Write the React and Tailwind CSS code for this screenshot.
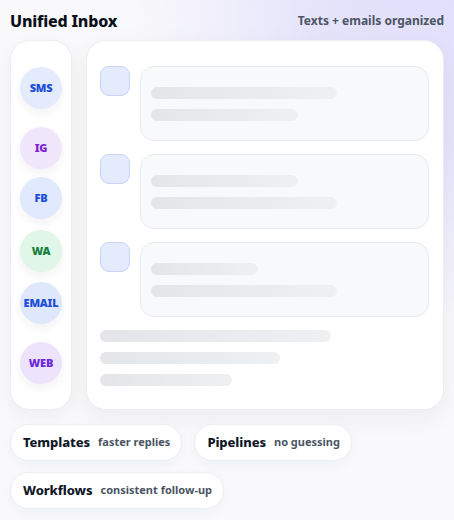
const channels = [
  { label: 'SMS', cls: 'bg-[#e3ebfd] text-[#1d4ed8]', mt: 'mt-[26px]' },
  { label: 'IG', cls: 'bg-[#f0e7fd] text-[#7e22ce]', mt: 'mt-[18px]' },
  { label: 'FB', cls: 'bg-[#e0e9fd] text-[#1d4ed8]', mt: 'mt-[8px]' },
  { label: 'WA', cls: 'bg-[#e0f6e9] text-[#15803d]', mt: 'mt-[11px]' },
  { label: 'EMAIL', cls: 'bg-[#dfe7fd] text-[#1d4ed8]', mt: 'mt-[10px]' },
  { label: 'WEB', cls: 'bg-[#ede3fd] text-[#6d28d9]', mt: 'mt-[18px]' },
];

const rows = [
  ['w-[186px]', 'w-[147px]'],
  ['w-[147px]', 'w-[186px]'],
  ['w-[107px]', 'w-[186px]'],
];

const pills = [
  { title: 'Templates', sub: 'faster replies' },
  { title: 'Pipelines', sub: 'no guessing' },
  { title: 'Workflows', sub: 'consistent follow-up' },
];

const Bar = ({ w }) => (
  <div className={`${w} h-3 rounded-full bg-gradient-to-r from-[#e4e5e9] to-[#eff0f2]`} />
);

const App = () => {
  return (
    <div
      className="w-[454px] h-[520px] overflow-hidden bg-[#f9f9fb] bg-[radial-gradient(ellipse_320px_330px_at_100%_0%,#e1dffb_0%,#e6e4fb_45%,rgba(249,249,251,0)_100%)] px-[10px] text-[#111827]"
      style={{ fontFamily: '"Noto Sans", "Open Sans", sans-serif' }}
    >
      <div className="flex items-center justify-between h-[40px] pt-[1px]">
        <h1 className="text-[16px] font-extrabold tracking-[-0.2px] text-[#0b0f19]">Unified Inbox</h1>
        <span className="text-[12px] font-bold text-[#4b5563]">Texts + emails organized</span>
      </div>

      <div className="flex gap-[14px] h-[370px]">
        <div className="w-[62px] shrink-0 rounded-[20px] bg-white border border-[#eceef2] shadow-[0_6px_18px_rgba(30,41,59,0.05)] flex flex-col items-center">
          {channels.map(c => (
            <div
              key={c.label}
              className={`${c.mt} w-[42px] h-[42px] rounded-full ${c.cls} flex items-center justify-center text-[11px] font-black tracking-[-0.2px] shadow-[0_4px_10px_rgba(30,41,59,0.06)]`}
            >
              {c.label}
            </div>
          ))}
        </div>

        <div className="flex-1 rounded-[20px] bg-white border border-[#eceef2] shadow-[0_8px_24px_rgba(30,41,59,0.06)] pl-[13px] pr-[14px] pt-[25px]">
          <div className="flex flex-col gap-[13px]">
            {rows.map((r, i) => (
              <div key={i} className="flex gap-[10px]">
                <div className="w-[30px] h-[30px] shrink-0 rounded-[9px] bg-[#e3ebfd] border border-[#c7d5fb]" />
                <div className="flex-1 h-[75px] rounded-[14px] bg-[#f8f9fb] border border-[#e8eaee] pl-[10px] pt-[20px] flex flex-col gap-[10px]">
                  <Bar w={r[0]} />
                  <Bar w={r[1]} />
                </div>
              </div>
            ))}
          </div>
          <div className="mt-[13px] flex flex-col gap-[10px]">
            <Bar w="w-[231px]" />
            <Bar w="w-[180px]" />
            <Bar w="w-[132px]" />
          </div>
        </div>
      </div>

      <div className="mt-[14px] flex flex-wrap gap-x-[12px] gap-y-[11px] w-[360px]">
        {pills.map(p => (
          <div
            key={p.title}
            className="h-[37px] rounded-full bg-white border border-[#eceef2] shadow-[0_4px_12px_rgba(30,41,59,0.04)] pl-[12px] pr-[11px] flex items-center gap-[8px]"
          >
            <span className="text-[13px] font-extrabold tracking-[-0.1px] text-[#111827]">{p.title}</span>
            <span className="text-[11px] font-bold text-[#4b5563]">{p.sub}</span>
          </div>
        ))}
      </div>
    </div>
  );
};

export default App;
